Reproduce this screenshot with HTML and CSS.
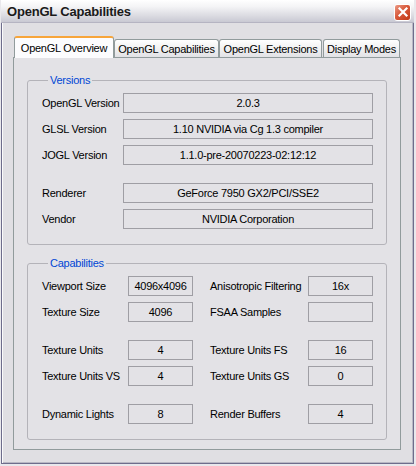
FILE: index.html
```html
<!DOCTYPE html>
<html>
<head>
<meta charset="utf-8">
<link rel="stylesheet" href="styles.css">
</head>
<body>
<div class="window">
  <div class="titlebar">
    <span class="title">OpenGL Capabilities</span>
    <span class="close"><svg width="14" height="14" viewBox="0 0 14 14"><path d="M3.5 3.5 L10.5 10.5 M10.5 3.5 L3.5 10.5" stroke="#fff" stroke-width="2.2" stroke-linecap="square"/></svg></span>
  </div>
  <div class="client">
    <div class="tabs">
      <div class="tab active t1">OpenGL Overview</div>
      <div class="tab t2">OpenGL Capabilities</div>
      <div class="tab t3">OpenGL Extensions</div>
      <div class="tab t4">Display Modes</div>
    </div>
    <div class="panel">
      <fieldset class="group">
        <legend>Versions</legend>
        <div class="vrow"><span class="lbl">OpenGL Version</span><span class="field">2.0.3</span></div>
        <div class="vrow"><span class="lbl">GLSL Version</span><span class="field">1.10 NVIDIA via Cg 1.3 compiler</span></div>
        <div class="vrow"><span class="lbl">JOGL Version</span><span class="field">1.1.0-pre-20070223-02:12:12</span></div>
        <div class="spacer"></div>
        <div class="vrow"><span class="lbl">Renderer</span><span class="field">GeForce 7950 GX2/PCI/SSE2</span></div>
        <div class="vrow"><span class="lbl">Vendor</span><span class="field">NVIDIA Corporation</span></div>
      </fieldset>
      <fieldset class="group caps">
        <legend>Capabilities</legend>
        <div class="crow">
          <span class="lbl">Viewport Size</span><span class="field">4096x4096</span><span></span>
          <span class="lbl">Anisotropic Filtering</span><span class="field">16x</span>
        </div>
        <div class="crow">
          <span class="lbl">Texture Size</span><span class="field">4096</span><span></span>
          <span class="lbl">FSAA Samples</span><span class="field"></span>
        </div>
        <div class="spacer"></div>
        <div class="crow">
          <span class="lbl">Texture Units</span><span class="field">4</span><span></span>
          <span class="lbl">Texture Units FS</span><span class="field">16</span>
        </div>
        <div class="crow">
          <span class="lbl">Texture Units VS</span><span class="field">4</span><span></span>
          <span class="lbl">Texture Units GS</span><span class="field">0</span>
        </div>
        <div class="spacer"></div>
        <div class="crow">
          <span class="lbl">Dynamic Lights</span><span class="field">8</span><span></span>
          <span class="lbl">Render Buffers</span><span class="field">4</span>
        </div>
      </fieldset>
    </div>
  </div>
</div>
</body>
</html>
```
FILE: styles.css
```css
html, body {
  margin: 0;
  padding: 0;
  background: #e9e8ec;
}
body {
  font-family: "Liberation Sans", Arial, sans-serif;
  font-size: 11px;
  letter-spacing: -0.25px;
  color: #000;
}
.window {
  margin-left: 1px;
  width: 411px;
  height: 463px;
  border: 1px solid #6e6d8c;
  border-top: none;
  background: #e0dfe3;
  box-shadow: inset 1px 0 0 #fbfbfc, inset -1px 0 0 #b9b8c4, inset 0 -1px 0 #b9b8c4;
  display: flex;
  flex-direction: column;
}
.titlebar {
  height: 22px;
  flex: none;
  display: flex;
  align-items: center;
  justify-content: space-between;
  padding: 0 3px 0 6px;
  margin: 0 -1px;
  background: linear-gradient(#ffffff 0%, #f4f4f6 30%, #dcdce2 70%, #c9c9d3 100%);
  border-bottom: 1px solid #b5b4c2;
}
.title {
  font-weight: bold;
  font-size: 13px;
  letter-spacing: -0.2px;
  color: #1a1a1a;
  padding-top: 1px;
}
.close {
  width: 15px;
  height: 15px;
  border: 1px solid #fff;
  border-radius: 3px;
  background: linear-gradient(135deg, #eb9b86 0%, #d8593b 45%, #c13916 100%);
  display: flex;
  align-items: center;
  justify-content: center;
  margin-top: 2px;
}
.close svg { display: block; }
.client {
  flex: 1;
  padding: 13px 12px 13px 11px;
  display: flex;
  flex-direction: column;
}
.tabs {
  display: flex;
  align-items: flex-end;
  height: 21px;
  padding-left: 1px;
}
.tab {
  flex: none;
  height: 18px;
  box-sizing: border-box;
  padding: 2px 0 0;
  border: 1px solid #919b9c;
  border-bottom: none;
  border-radius: 3px 3px 0 0;
  background: linear-gradient(#ffffff, #f1f1f1 50%, #e2e2e6);
  line-height: 14px;
  text-align: center;
  white-space: nowrap;
}
.t1 { width: 100px; }
.t2 { width: 105px; }
.t3 { width: 103px; }
.t4 { width: 77px; margin-left: 1px; }
.tab.active {
  height: 22px;
  margin-bottom: -1px;
  padding-top: 3px;
  border-top: 2px solid #f7a53b;
  background: #fcfcfe;
  position: relative;
  z-index: 1;
}
.panel {
  flex: 1;
  border: 1px solid #919b9c;
  background: #e3e2e6;
  padding: 16px 13px 9px 13px;
  display: flex;
  flex-direction: column;
  gap: 12px;
}
.group {
  margin: 0;
  border: 1px solid #b4b3b9;
  border-radius: 3px;
  padding: 6px 13px 15px 14px;
  display: flex;
  flex-direction: column;
  gap: 6px;
}
.group legend {
  color: #0046d5;
  padding: 0 2px;
  margin-left: 6px;
  line-height: 13px;
}
.spacer {
  height: 6px;
}
.vrow {
  display: grid;
  grid-template-columns: 81px 250px;
  align-items: center;
  height: 20px;
}
.crow {
  display: grid;
  grid-template-columns: 86px 65px 17px 98px 65px;
  align-items: center;
  height: 20px;
}
.lbl {
  white-space: nowrap;
}
.field {
  box-sizing: border-box;
  height: 20px;
  border: 1px solid #9f9ea4;
  text-align: center;
  line-height: 18px;
  white-space: nowrap;
}
```
